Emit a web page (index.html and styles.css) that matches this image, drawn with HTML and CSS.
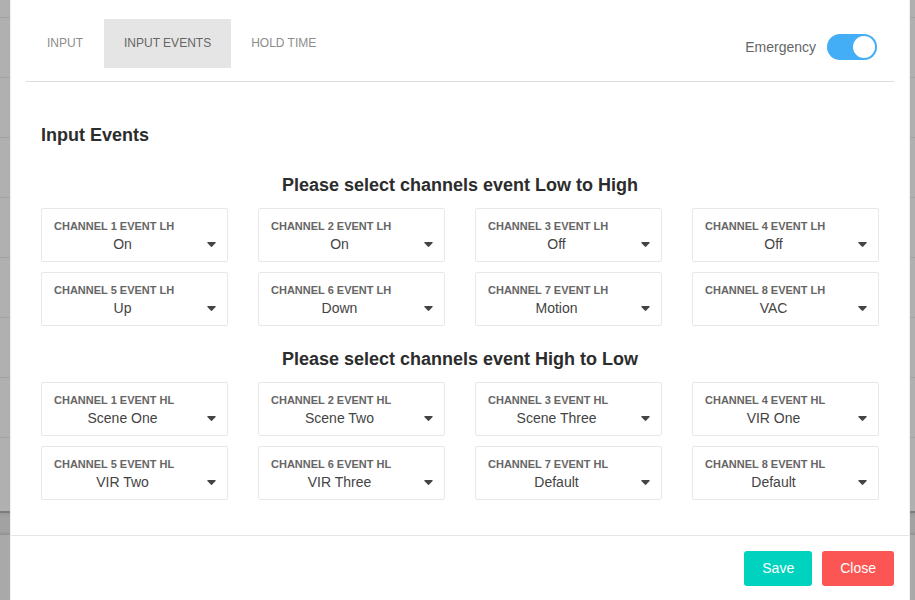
FILE: index.html
```html
<!DOCTYPE html>
<html lang="en">
<head>
<meta charset="utf-8">
<meta name="viewport" content="width=device-width, initial-scale=1">
<title>Input Events</title>
<link rel="stylesheet" href="styles.css">
</head>
<body>
<div class="backdrop" aria-hidden="true">
  <div class="row row-first"></div>
  <div class="row"></div>
  <div class="row"></div>
  <div class="row"></div>
  <div class="row"></div>
  <div class="row"></div>
  <div class="row"></div>
  <div class="row"></div>
  <div class="row row-last"></div>
  <div class="page-gap"></div>
  <div class="page-foot"></div>
</div>
<div class="modal" role="dialog" aria-labelledby="title">
  <div class="modal-body">
    <header class="top">
      <nav class="tabs">
        <button class="tab" type="button">INPUT</button>
        <button class="tab active" type="button">INPUT EVENTS</button>
        <button class="tab" type="button">HOLD TIME</button>
      </nav>
      <label class="emergency">Emergency
        <input class="switch" type="checkbox" role="switch" checked>
      </label>
    </header>
    <main class="content">
      <h1 class="title" id="title">Input Events</h1>
      <h2 class="group-title">Please select channels event Low to High</h2>
      <div class="grid" id="low-high"></div>
      <h2 class="group-title">Please select channels event High to Low</h2>
      <div class="grid" id="high-low"></div>
    </main>
  </div>
  <footer class="actions">
    <button class="btn save" type="button">Save</button>
    <button class="btn close" type="button">Close</button>
  </footer>
</div>
<script src="script.js"></script>
</body>
</html>
```
FILE: styles.css
```css
* {
  box-sizing: border-box;
}

body {
  margin: 0;
  min-height: 100vh;
  padding: 0 5px 0 10px;
  display: flex;
  background: #a9a9a9;
  color: #666;
  font: 14px/20px "Liberation Sans", Arial, sans-serif;
}

button,
select {
  font: inherit;
}

.backdrop {
  position: fixed;
  inset: 0;
  z-index: -1;
  display: flex;
  flex-direction: column;
}

.row {
  flex: none;
  height: 60px;
  background: #b0b0b0;
  border-bottom: 1px solid #a3a3a3;
}

.row-first {
  height: 18px;
}

.row-last {
  height: 75px;
  border-bottom: 2px solid #7d7d7d;
}

.page-gap {
  flex: none;
  height: 22px;
  background: linear-gradient(#999, #a2a2a2 4px, #a2a2a2 18px, #929292);
}

.page-foot {
  flex: 1;
  background: #a9a9a9;
}

.modal {
  flex: 1;
  display: flex;
  flex-direction: column;
  background: #fff;
  border: solid #f0f0f0;
  border-width: 0 1px;
}

.modal-body {
  flex: 1;
  padding: 0 15px;
}

.top {
  display: flex;
  justify-content: space-between;
  align-items: center;
  padding: 19px 17px 13px 0;
  border-bottom: 1px solid #dcdcdc;
}

.tabs {
  display: flex;
}

.tab {
  height: 49px;
  padding: 0 20px 2px;
  border: 0;
  background: none;
  color: #8c8c8c;
  font-size: 12px;
}

.tab:first-child {
  padding-left: 21px;
  padding-right: 21px;
}

.tab.active {
  background: #e5e5e5;
  color: #666;
}

.emergency {
  display: flex;
  align-items: center;
  gap: 11px;
  padding-top: 6px;
}

.switch {
  appearance: none;
  display: flex;
  justify-content: flex-end;
  width: 50px;
  height: 26px;
  margin: 0;
  padding: 2px;
  border-radius: 13px;
  background: #43aef5;
}

.switch::before {
  content: "";
  width: 22px;
  height: 22px;
  border-radius: 50%;
  background: #fff;
}

.switch:not(:checked) {
  justify-content: flex-start;
  background: #ccc;
}

.content {
  padding: 41px 15px 35px;
}

.title,
.group-title {
  margin: 0;
  color: #2c2c2c;
  font-size: 18px;
  font-weight: bold;
  line-height: 24px;
}

.title {
  margin-bottom: 26px;
}

.group-title {
  margin-bottom: 11px;
  text-align: center;
}

.grid + .group-title {
  margin-top: 21px;
}

.grid {
  display: grid;
  grid-template-columns: repeat(4, 1fr);
  gap: 10px 30px;
}

.field {
  position: relative;
  height: 54px;
  padding: 9px 12px;
  border: 1px solid #e8e8e8;
  border-radius: 2px;
}

.field label {
  display: block;
  color: #666;
  font-size: 11px;
  font-weight: bold;
  line-height: 16px;
}

.field select {
  appearance: none;
  display: block;
  width: 100%;
  height: 18px;
  padding: 0 24px 0 0;
  border: 0;
  background: none;
  color: #444;
  text-align: center;
  text-align-last: center;
}

.caret {
  position: absolute;
  right: 11px;
  bottom: 14px;
  width: 9px;
  height: 5px;
  fill: #444;
  pointer-events: none;
}

.actions {
  display: flex;
  justify-content: flex-end;
  gap: 10px;
  padding: 15px 15px 14px;
  border-top: 1px solid #e5e5e5;
}

.btn {
  height: 35px;
  padding: 0 18px 2px;
  border: 0;
  border-radius: 3px;
  color: #fff;
}

.save {
  background: #00d2c0;
}

.close {
  background: #fb5654;
}
```
FILE: script.js
```javascript
const groups = {
  "low-high": { suffix: "LH", values: ["On", "On", "Off", "Off", "Up", "Down", "Motion", "VAC"] },
  "high-low": { suffix: "HL", values: ["Scene One", "Scene Two", "Scene Three", "VIR One", "VIR Two", "VIR Three", "Default", "Default"] }
};

for (const [id, group] of Object.entries(groups)) {
  document.getElementById(id).innerHTML = group.values.map((value, i) => `
    <div class="field">
      <label for="${id}-${i}">CHANNEL ${i + 1} EVENT ${group.suffix}</label>
      <select id="${id}-${i}"><option>${value}</option></select>
      <svg class="caret" viewBox="0 0 9 5" aria-hidden="true"><path d="M1 0h7q1 0 .6 1L5.2 4.6q-.7.7-1.4 0L.4 1Q0 0 1 0z"/></svg>
    </div>`).join("");
}
```
